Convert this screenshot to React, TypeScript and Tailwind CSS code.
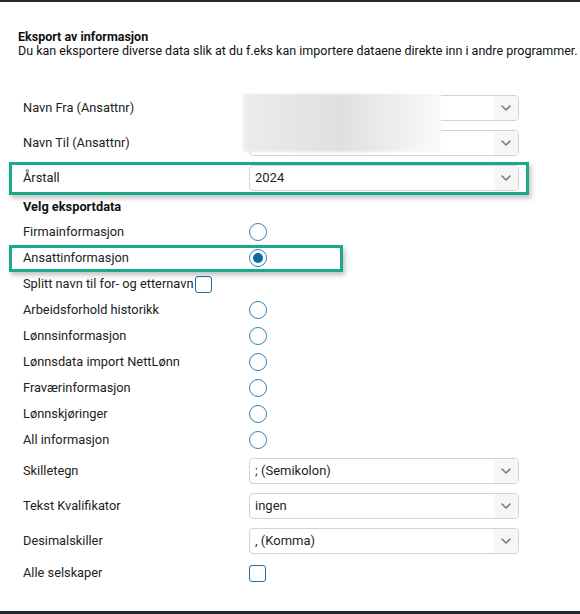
import React from "react";

const FONT = { fontFamily: "Roboto, 'Liberation Sans', sans-serif" };

function Chevron() {
  return (
    <svg viewBox="0 0 10 6" className="h-[6px] w-[10px]" fill="none">
      <path d="M1 1l4 4 4-4" stroke="#7a7a7a" strokeWidth="1.6" strokeLinecap="round" strokeLinejoin="round" />
    </svg>
  );
}

function Select({ value }: { value?: string }) {
  return (
    <div className="flex h-[26px] w-[270px] items-stretch overflow-hidden rounded-[4px] border border-[#d3d3d3] bg-white">
      <span className="flex flex-1 items-center pl-[5px] text-[13px] text-[#1f1f1f]">{value}</span>
      <span className="flex w-[24px] items-center justify-center bg-[#f6f6f6]">
        <Chevron />
      </span>
    </div>
  );
}

function Radio({ checked }: { checked?: boolean }) {
  return (
    <span className="flex h-[18px] w-[18px] items-center justify-center rounded-full border-[1.5px] border-[#2f83b5] bg-white">
      {checked && <span className="h-[10px] w-[10px] rounded-full bg-[#0b69a6]" />}
    </span>
  );
}

function Checkbox() {
  return <span className="inline-block h-[17px] w-[17px] rounded-[3px] border-[1.5px] border-[#1f6fa0] bg-white" />;
}

function Highlight({ width, height, top }: { width: number; height: number; top: number }) {
  return (
    <div
      className="pointer-events-none absolute left-[9px] border-[3px] border-[#1aa98a] shadow-[2px_3px_5px_rgba(0,0,0,0.25)]"
      style={{ width, height, top }}
    />
  );
}

function SelectRow({ label, value, className = "" }: { label: string; value?: string; className?: string }) {
  return (
    <div className={`relative flex h-[26px] items-center pl-[23px] ${className}`}>
      <span className="w-[226px] text-[12.8px] text-[#222]">{label}</span>
      <Select value={value} />
    </div>
  );
}

function RadioRow({ label, checked }: { label: string; checked?: boolean }) {
  return (
    <div className="relative flex h-[26px] items-center pl-[23px]">
      <span className="w-[226px] text-[12.8px] text-[#222]">{label}</span>
      <Radio checked={checked} />
    </div>
  );
}

const radios = [
  "Arbeidsforhold historikk",
  "Lønnsinformasjon",
  "Lønnsdata import NettLønn",
  "Fraværinformasjon",
  "Lønnskjøringer",
  "All informasjon",
];

export default function App() {
  return (
    <div className="flex h-[614px] w-[580px] flex-col overflow-hidden border-t-2 border-[#25282a] bg-white" style={FONT}>
      <div className="flex-1">
        <div className="pl-[18px] pt-[28px] text-[12.5px] leading-[14px] text-[#111]">
          <div className="font-bold">Eksport av informasjon</div>
          <div className="whitespace-nowrap">
            Du kan eksportere diverse data slik at du f.eks kan importere dataene direkte inn i andre programmer.
          </div>
        </div>

        <div className="relative mt-[37px]">
          <SelectRow label="Navn Fra (Ansattnr)" />
          <SelectRow label="Navn Til (Ansattnr)" className="mt-[9px]" />
          {/* blurred-out employee names */}
          <div className="pointer-events-none absolute left-[243px] top-[-1px] h-[58px] w-[198px] bg-gradient-to-r from-[#ececec] via-[#dfdfdf] to-[#fbfbfb] blur-[1.5px]" />
          <div className="relative mt-[9px]">
            <SelectRow label="Årstall" value="2024" />
            <Highlight width={520} height={33} top={-3} />
          </div>

          <div className="flex h-[28px] items-center pl-[23px] pt-[4px] text-[12.8px] font-bold text-[#111]">
            Velg eksportdata
          </div>
          <RadioRow label="Firmainformasjon" />
          <div className="relative">
            <RadioRow label="Ansattinformasjon" checked />
            <Highlight width={334} height={27} top={0} />
          </div>
          <div className="flex h-[26px] items-center gap-[2px] pl-[23px] text-[12.8px] text-[#222]">
            <span>Splitt navn til for- og etternavn</span>
            <Checkbox />
          </div>
          {radios.map((r) => (
            <RadioRow key={r} label={r} />
          ))}

          <SelectRow label="Skilletegn" value="; (Semikolon)" className="mt-[5px]" />
          <SelectRow label="Tekst Kvalifikator" value="ingen" className="mt-[9px]" />
          <SelectRow label="Desimalskiller" value=", (Komma)" className="mt-[9px]" />
          <div className="mt-[6px] flex h-[26px] items-center pl-[23px]">
            <span className="w-[226px] text-[12.8px] text-[#222]">Alle selskaper</span>
            <Checkbox />
          </div>
        </div>
      </div>
      <div className="h-[3px] bg-[#25282a]" />
    </div>
  );
}
